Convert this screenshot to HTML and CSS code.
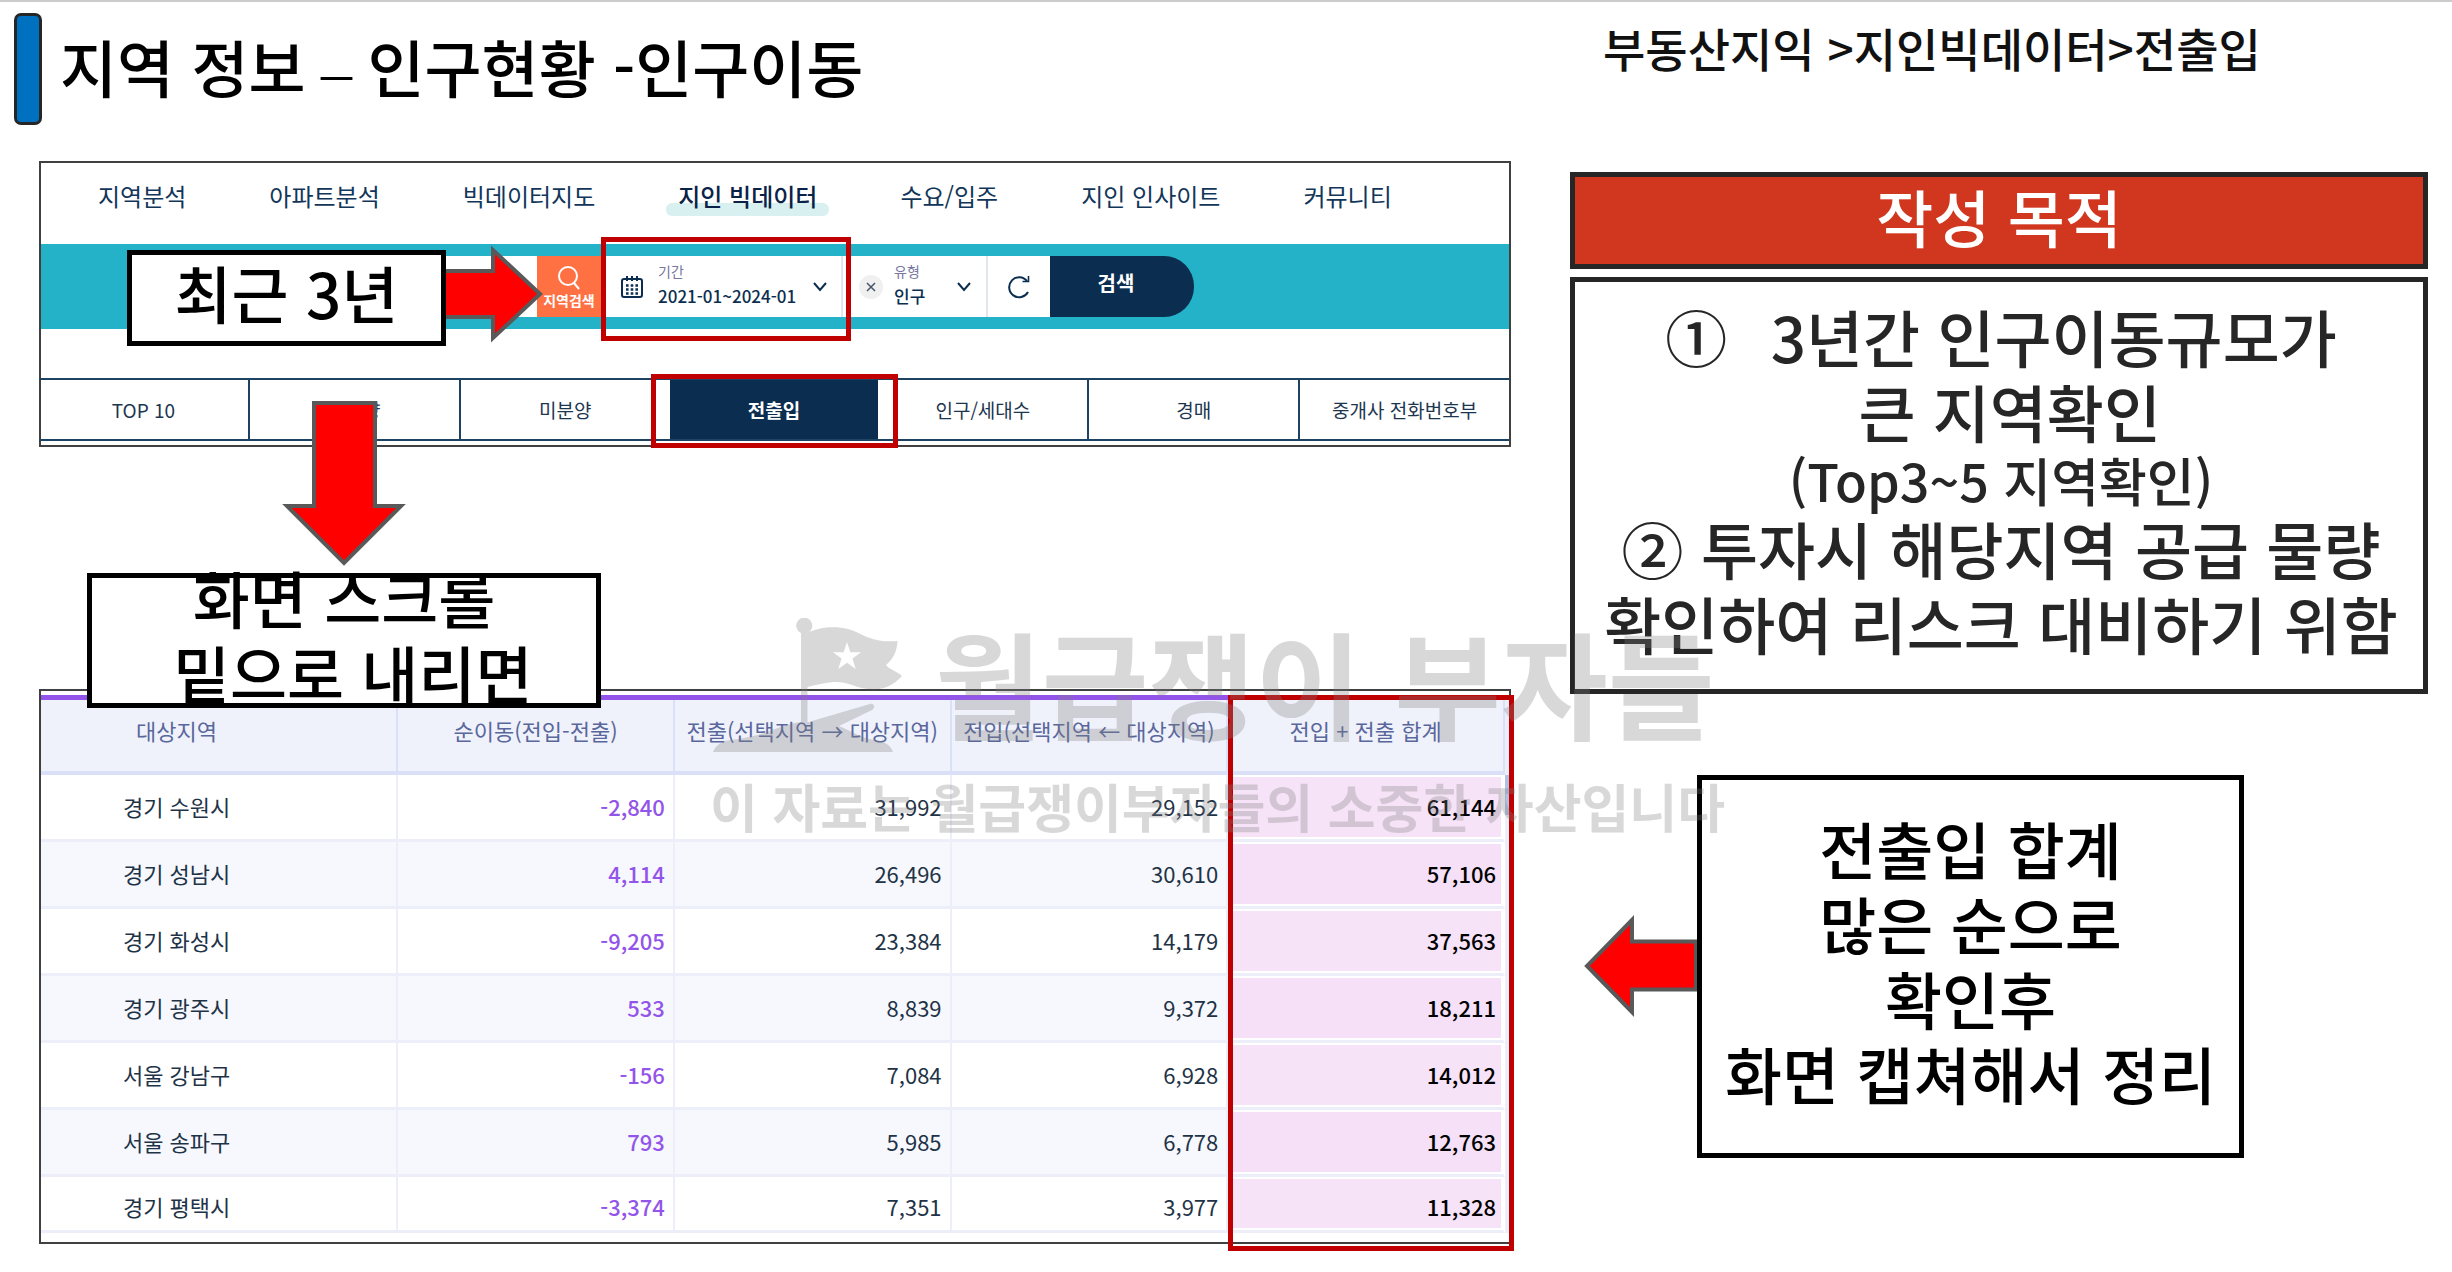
FILE: index.html
```html
<!DOCTYPE html>
<html lang="ko">
<head>
<meta charset="utf-8">
<title>지역 정보 – 인구현황 -인구이동</title>
<link rel="stylesheet" href="styles.css">
</head>
<body>
<div class="slide">
  <header class="head">
    <div class="head-title">
      <span class="head-bar"></span>
      <h1>지역 정보<span class="dash"> – </span>인구현황 -인구이동</h1>
    </div>
    <p class="crumb">부동산지익 &gt;지인빅데이터&gt;전출입</p>
  </header>

  <main class="content">
    <div class="col-left">
      <section class="panel site">
        <nav class="menu">
          <a href="#">지역분석</a>
          <a href="#">아파트분석</a>
          <a href="#">빅데이터지도</a>
          <a href="#" class="current">지인 빅데이터</a>
          <a href="#">수요/입주</a>
          <a href="#">지인 인사이트</a>
          <a href="#">커뮤니티</a>
        </nav>

        <form class="band">
          <input class="region-input" type="text" aria-label="지역">
          <button class="region-btn" type="button">
            <svg width="24" height="26" viewBox="0 0 24 26" fill="none" stroke="#fff" stroke-width="2"><circle cx="11" cy="11" r="9"/><path d="M17 18l5 6"/></svg>
            지역검색
          </button>
          <div class="field period">
            <svg class="cal" width="24" height="24" viewBox="0 0 24 24" fill="none" stroke="#0b2e50" stroke-width="2"><rect x="2" y="4" width="20" height="18" rx="2"/><path d="M7 1v5M12 1v5M17 1v5"/><path d="M6 10.500h12M6 14.500h12M6 18.500h12" stroke-width="2.400" stroke-dasharray="2.600 2.100"/></svg>
            <div class="field-text">
              <label for="period">기간</label>
              <select id="period"><option>2021-01~2024-01</option></select>
            </div>
            <svg class="chev" width="16" height="12" viewBox="0 0 16 12" fill="none" stroke="#0b2e50" stroke-width="2"><path d="M2 2l6 7 6-7"/></svg>
            <span class="frame frame-period"></span>
          </div>
          <div class="field kind">
            <button class="clear" type="button" aria-label="지우기"><svg width="24" height="24" viewBox="0 0 24 24" stroke="#44556b" stroke-width="1.500"><path d="M8 8l8 8M16 8l-8 8"/></svg></button>
            <div class="field-text">
              <label for="kind">유형</label>
              <select id="kind"><option>인구</option></select>
            </div>
            <svg class="chev" width="16" height="12" viewBox="0 0 16 12" fill="none" stroke="#0b2e50" stroke-width="2"><path d="M2 2l6 7 6-7"/></svg>
          </div>
          <button class="reset" type="button" aria-label="초기화"><svg width="24" height="24" viewBox="0 0 24 24" fill="none" stroke="#0b2e50" stroke-width="2"><path d="M21 17A10 10 0 1 1 20 6"/><path d="M15.500 6.500H21.500V1" stroke-width="1.600"/></svg></button>
          <button class="go" type="button">검색</button>
        </form>

        <nav class="tabs">
          <a href="#">TOP 10</a>
          <a href="#">거래량</a>
          <a href="#">미분양</a>
          <a href="#" class="active">전출입<span class="frame frame-tab"></span></a>
          <a href="#">인구/세대수</a>
          <a href="#">경매</a>
          <a href="#">중개사 전화번호부</a>
        </nav>

        <svg class="arrow arrow-right" width="108" height="104" viewBox="0 0 108 104"><path d="M0 29H56V8L103 52L56 96V75H0Z"/></svg>
        <p class="note note-years">최근 3년</p>
        <svg class="arrow arrow-down" width="130" height="170" viewBox="0 0 130 170"><path d="M35 4H96V107H122L65 164L8 107H35Z"/></svg>
      </section>

      <section class="panel data">
        <div class="data-body">
          <table>
            <colgroup><col class="c-name"><col><col><col><col></colgroup>
            <thead>
              <tr><th>대상지역</th><th>순이동(전입-전출)</th><th>전출(선택지역 → 대상지역)</th><th>전입(선택지역 ← 대상지역)</th><th>전입 + 전출 합계</th></tr>
            </thead>
            <tbody>
              <tr><td>경기 수원시</td><td>-2,840</td><td>31,992</td><td>29,152</td><td>61,144</td></tr>
              <tr><td>경기 성남시</td><td>4,114</td><td>26,496</td><td>30,610</td><td>57,106</td></tr>
              <tr><td>경기 화성시</td><td>-9,205</td><td>23,384</td><td>14,179</td><td>37,563</td></tr>
              <tr><td>경기 광주시</td><td>533</td><td>8,839</td><td>9,372</td><td>18,211</td></tr>
              <tr><td>서울 강남구</td><td>-156</td><td>7,084</td><td>6,928</td><td>14,012</td></tr>
              <tr><td>서울 송파구</td><td>793</td><td>5,985</td><td>6,778</td><td>12,763</td></tr>
              <tr><td>경기 평택시</td><td>-3,374</td><td>7,351</td><td>3,977</td><td>11,328</td></tr>
            </tbody>
          </table>
          <div class="scroll"><span></span></div>
        </div>
        <span class="frame frame-total"></span>
        <p class="note note-scroll">화면 스크롤<br>&nbsp;밑으로 내리면</p>
      </section>
    </div>

    <div class="col-right">
      <h2 class="purpose-title">작성 목적</h2>
      <div class="purpose">
        <p>①&ensp;&thinsp;3년간 인구이동규모가<br>&nbsp;큰 지역확인</p>
        <p class="small">(Top3~5 지역확인)</p>
        <p>② 투자시 해당지역 공급 물량<br>확인하여 리스크 대비하기 위함</p>
      </div>
      <div class="sum">
        <svg class="arrow arrow-left" width="120" height="104" viewBox="0 0 120 104"><path d="M118 27.500H54V6L9 52L54 98V75.500H118Z"/></svg>
        <p class="note note-sum">전출입 합계<br>많은 순으로<br>확인후<br>화면 캡쳐해서 정리</p>
      </div>
    </div>
  </main>

  <div class="watermark">
    <div class="wm-brand">
      <svg width="192" height="136" viewBox="0 0 192 136" fill="#808080"><path fill-rule="evenodd" d="M94.500 15C106 9 122 8 135 11C150 15 156 25 184.500 23C184 34 180 41 173 47C177 52 184 53 189 58C180 68 168 73 155 71C140 69 134 63 120 64C110 65 102 67 94.500 69V104C96 104 97 104 99 103L157 86C161 85 163 89 159 92L126 108C140 114 150 121 162 122C172 123 178 128 180 134H0C3 127 8 123 18 122C36 120 50 116 62 111C70 108 80 105 88 104V15A8 8 0 1 1 94.500 15ZM134 24L130.600 34.200H120L128.500 40.600L125.300 51L134 44.800L142.700 51L139.500 40.600L148 34.200H137.400Z"/></svg>
      <span>월급쟁이 부자들</span>
    </div>
    <p>이 자료는 월급쟁이부자들의 소중한 자산입니다</p>
  </div>
</div>
</body>
</html>
```
FILE: styles.css
```css
* { box-sizing: border-box; }
body, h1, h2, p { margin: 0; }
body {
  background: #fff;
  color: #000;
  font-family: "Noto Sans CJK KR", "Noto Sans", sans-serif;
}
a { color: inherit; text-decoration: none; }
button, input, select {
  margin: 0;
  padding: 0;
  border: 0;
  border-radius: 0;
  background: none;
  color: inherit;
  font: inherit;
}
svg { display: block; flex: none; }

.slide {
  position: relative;
  border-top: 2px solid #ccc;
  overflow: hidden;
}

/* Title row */
.head {
  display: grid;
  grid-template-columns: minmax(0, 1570fr) minmax(0, 882fr);
  height: 159px;
}
.head-title {
  display: flex;
  gap: 18px;
  padding: 11px 0 0 14px;
}
.head-bar {
  width: 28px;
  height: 112px;
  border: 3px solid #262626;
  border-radius: 7px;
  background: #0070c0;
}
h1 {
  font-size: 62px;
  line-height: 106px;
  font-weight: 500;
  white-space: nowrap;
}
.dash { font-family: "Liberation Serif", serif; }
.crumb {
  padding: 16px 0 0 33px;
  font-size: 46px;
  line-height: 58px;
  font-weight: 500;
  color: #111;
  white-space: nowrap;
}

/* Columns */
.content {
  display: grid;
  grid-template-columns: minmax(0, 1472fr) minmax(0, 858fr);
  gap: 59px;
  padding: 0 24px 20px 39px;
}
.col-left { display: flex; flex-direction: column; gap: 242px; }
.col-right { display: flex; flex-direction: column; padding-top: 11px; }
.panel { position: relative; border: 2px solid #404040; }

/* Site menu */
.menu {
  display: flex;
  align-items: flex-start;
  gap: 83px;
  height: 81px;
  padding: 15px 0 0 57px;
  font-size: 24px;
  line-height: 36px;
  color: #12365a;
  white-space: nowrap;
}
.menu .current {
  position: relative;
  z-index: 0;
  color: #0b2248;
  font-weight: 500;
}
.menu .current::before {
  content: "";
  position: absolute;
  z-index: -1;
  inset: 25px -12px -2px;
  border-radius: 6px;
  background: #d9f0f0;
}

/* Search band */
.band {
  display: flex;
  height: 85px;
  padding: 12px 0 12px 259px;
  background: #23b2c7;
  color: #0b2e50;
}
.region-input { width: 237px; background: #fff; }
.region-btn {
  display: flex;
  flex-direction: column;
  align-items: center;
  width: 64px;
  padding-bottom: 2px;
  background: #ff7043;
  color: #fff;
  font-size: 14px;
  line-height: 16px;
  font-weight: 700;
  white-space: nowrap;
}
.field {
  position: relative;
  display: flex;
  align-items: center;
  background: #fff;
  border-right: 2px solid #e0e5ee;
}
.period { z-index: 1; width: 242px; padding-left: 19px; }
.kind { width: 145px; padding-left: 16px; }
.field-text { display: flex; flex-direction: column; padding-bottom: 5px; }
.period .field-text { width: 146px; margin: 0 8px 0 14px; }
.kind .field-text { width: 48px; margin: 0 14px 0 11px; }
.field label {
  font-size: 14px;
  line-height: 24px;
  color: #77779f;
}
.field select {
  appearance: none;
  font-size: 17px;
  line-height: 26px;
  font-weight: 500;
}
.clear {
  width: 24px;
  height: 24px;
  border-radius: 12px;
  background: #f0f0f0;
}
.reset {
  display: flex;
  align-items: center;
  justify-content: center;
  width: 62px;
  background: #fff;
}
.go {
  width: 144px;
  padding: 0 12px 8px 0;
  border-radius: 0 30px 30px 0;
  background: #0b2e50;
  color: #fff;
  font-size: 20px;
  font-weight: 700;
}

/* Category tabs */
.tabs {
  display: flex;
  height: 63px;
  margin: 49px 0 4px -2px;
  border: solid #1d4262;
  border-width: 2px 0;
  font-size: 19px;
  line-height: 60px;
  color: #1d3650;
}
.tabs a {
  flex: 1;
  border-left: 2px solid #1d4262;
  text-align: center;
  white-space: nowrap;
}
.tabs a:first-child { border-left: 0; }
.tabs .active {
  position: relative;
  border-left: 0;
  background: #0b2e50;
  color: #fff;
  font-weight: 700;
}
.tabs .active + a { border-left: 0; }

/* Highlight frames */
.frame {
  position: absolute;
  border: 5px solid #c00000;
  pointer-events: none;
}
.frame-period { inset: -19px -10px -24px 0; }
.frame-tab { inset: -6px -20px -9px -19px; }
.frame-total { top: 4px; right: -5px; bottom: -9px; width: 286px; }

/* Notes and arrows */
.arrow { position: absolute; overflow: visible; }
.arrow path { fill: #f00; stroke: #595959; stroke-width: 4; }
.arrow-right { left: 396px; top: 79px; }
.arrow-down { left: 238px; top: 236px; }
.arrow-left { left: 8px; top: 139px; }
.note {
  display: flex;
  align-items: center;
  justify-content: center;
  padding-bottom: 12px;
  border: 5px solid #000;
  background: #fff;
  font-size: 62px;
  line-height: 75px;
  font-weight: 500;
  text-align: center;
  white-space: nowrap;
}
.note-years { position: absolute; left: 86px; top: 87px; width: 319px; height: 96px; }
.note-scroll { position: absolute; left: 46px; top: -118px; width: 514px; height: 135px; }

/* Migration table */
.data { padding: 4px 0 9px; }
.data-body { display: flex; border-top: 5px solid #9354ea; }
table {
  flex: 1;
  width: 100%;
  table-layout: fixed;
  border-spacing: 0;
  font-size: 22px;
  line-height: 32px;
  white-space: nowrap;
}
.c-name { width: 24.4%; }
th {
  height: 75px;
  padding: 0 0 11px;
  border-right: 2px solid #dae0f8;
  border-bottom: 4px solid #dae0f8;
  background: #eff2fb;
  color: #5a679c;
  font-weight: 400;
}
td {
  height: 67px;
  padding: 0 8px 3px 0;
  border-right: 2px solid #eceff9;
  border-bottom: 3px solid #eceff9;
  color: #1f3347;
  text-align: right;
}
th:first-child, td:first-child { padding-right: 84px; text-align: center; }
tr:nth-child(even) td { background: #f6f8fd; }
td:nth-child(2) { color: #9354ea; font-weight: 500; }
td:last-child {
  padding-right: 7px;
  border-right: 2px solid #fff;
  background: #f7e3f7;
  box-shadow: inset 0 0 0 2px #fff;
  color: #000;
  font-weight: 500;
}
tr:nth-child(even) td:last-child { background: #f5e0f7; }
tbody tr:last-child td { height: 56px; padding-top: 8px; }
.scroll { width: 4px; padding-top: 75px; background: #eceff9; }
.scroll span { display: block; height: 40px; background: #b3c0e2; }

/* Purpose */
.purpose-title {
  height: 97px;
  border: 5px solid #262626;
  background: #d1371f;
  color: #fff;
  font-size: 62px;
  line-height: 78px;
  font-weight: 500;
  text-align: center;
}
.purpose {
  margin-top: 8px;
  height: 417px;
  padding: 17px 0 0 4px;
  border: 5px solid #262626;
  color: #262626;
  font-size: 62px;
  line-height: 75px;
  font-weight: 500;
  text-align: center;
  white-space: nowrap;
}
.purpose .small { font-size: 52px; line-height: 62px; }
.sum { position: relative; margin-top: 81px; padding-left: 127px; }
.note-sum { position: relative; width: 547px; height: 383px; }

/* Watermark */
.watermark {
  position: absolute;
  top: 610px;
  left: 710px;
  opacity: .3;
  color: #808080;
  font-weight: 700;
  white-space: nowrap;
  pointer-events: none;
}
.wm-brand {
  display: flex;
  align-items: flex-start;
  gap: 30px;
  height: 144px;
  padding-left: 3px;
  font-size: 116px;
  line-height: 136px;
}
.wm-brand svg { margin-top: 6px; }
.watermark p { font-size: 52px; line-height: 80px; padding-top: 10px; }
.region-btn svg { margin: 9px 0 1px; }
```
